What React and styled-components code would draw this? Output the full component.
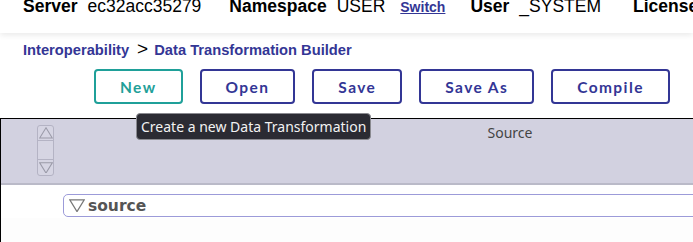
import React from "react";
import styled, { createGlobalStyle } from "styled-components";

const GlobalStyle = createGlobalStyle`
  html, body {
    margin: 0;
    padding: 0;
    background: #fff;
    overflow: hidden;
  }
  body {
    font-family: "Liberation Sans", Arial, sans-serif;
  }
`;

const Page = styled.div`
  width: 693px;
  height: 242px;
  overflow: hidden;
  position: relative;
`;

const TopBar = styled.header`
  height: 33px;
  display: flex;
  align-items: flex-start;
  padding-left: 23px;
  background: #fff;
  box-shadow: 0 2px 6px rgba(0, 0, 0, 0.09);
  white-space: nowrap;
  position: relative;
  z-index: 1;
`;

const Pair = styled.div`
  display: flex;
  align-items: baseline;
  gap: 10px;
  margin-top: -2px;
  margin-right: ${(p) => p.$space ?? 28}px;
  font-size: 17.5px;
  line-height: 17.5px;
  color: #000;
  b {
    font-weight: 700;
  }
`;

const SwitchLink = styled.a`
  font-size: 14px;
  font-weight: 700;
  color: #333695;
  text-decoration: underline;
  margin-left: 5px;
`;

const Breadcrumb = styled.nav`
  display: flex;
  align-items: baseline;
  padding: 7px 0 0 23px;
  height: 18px;
  line-height: 18px;
  font-size: 14.7px;
  font-weight: 700;
  color: #333695;
  span.sep {
    color: #000;
    font-weight: 400;
    font-size: 19px;
    margin: 0 6px 0 8px;
  }
`;

const Toolbar = styled.div`
  position: relative;
  display: flex;
  gap: 17px;
  padding: 11px 0 0 94px;
`;

const Button = styled.button`
  height: 35px;
  padding: 0 24px;
  background: #fff;
  border: 2px solid ${(p) => (p.$active ? "#1fa099" : "#333695")};
  color: ${(p) => (p.$active ? "#1fa099" : "#333695")};
  border-radius: 4px;
  font-family: Lato, "Liberation Sans", sans-serif;
  font-weight: 700;
  font-size: 15.5px;
  letter-spacing: 1.4px;
  cursor: pointer;
`;

const Tooltip = styled.div`
  position: absolute;
  left: 136px;
  top: 55px;
  height: 25px;
  padding: 0 4px;
  display: flex;
  align-items: center;
  background: #2b2b33;
  border: 1px solid #8a8a90;
  border-radius: 4px;
  color: #f2f2f2;
  font-family: "Noto Sans", "Open Sans", sans-serif;
  font-size: 14px;
  white-space: nowrap;
  z-index: 5;
`;

const Panel = styled.section`
  margin-top: 14px;
  width: 1000px;
  border-top: 1px solid #000;
  border-left: 1px solid #000;
  height: 200px;
  background: #fdfdfd;
`;

const PanelHeader = styled.div`
  display: grid;
  grid-template-columns: 62px 894px;
  height: 64px;
  background: #d2d1e0;
  border-bottom: 2px solid #babac8;
`;

const Gutter = styled.div`
  padding: 6px 0 0 36px;
`;

const Scroller = styled.div`
  width: 15px;
  height: 49px;
  border: 1px solid #b4b3c4;
  border-radius: 3px;
  display: grid;
  grid-template-rows: 15px 1fr 16px;
  background: #d6d5e3;
`;

const ScrollPart = styled.div`
  display: flex;
  align-items: center;
  justify-content: center;
  border-top: ${(p) => (p.$line === "top" ? "1px solid #b4b3c4" : "none")};
  border-bottom: ${(p) => (p.$line === "bottom" ? "1px solid #b4b3c4" : "none")};
`;

const ColumnTitle = styled.div`
  text-align: center;
  padding-top: 4px;
  font-family: "Noto Sans", "Open Sans", sans-serif;
  font-size: 14px;
  color: #444;
`;

const Body = styled.div`
  padding: 9px 0 0 62px;
  background: #fff;
  height: 24px;
`;

const TreeRow = styled.div`
  display: flex;
  align-items: center;
  gap: 3px;
  height: 21px;
  padding-left: 5px;
  border: 1px solid #9c9bd9;
  border-radius: 5px;
  background: #fff;
  font-family: "DejaVu Sans", Verdana, sans-serif;
  font-weight: 700;
  font-size: 15.5px;
  color: #555;
`;

const Tri = ({ up, size = 12, color = "#9a9aa8" }) => (
  <svg width={size} height={size * 0.85} viewBox="0 0 12 10">
    {up ? (
      <path d="M6 0.6 L11.4 9.4 L0.6 9.4 Z" fill="none" stroke={color} strokeWidth="0.9" />
    ) : (
      <path d="M0.6 0.6 L11.4 0.6 L6 9.4 Z" fill="none" stroke={color} strokeWidth="0.9" />
    )}
  </svg>
);

export default function App() {
  return (
    <Page>
      <GlobalStyle />
      <TopBar>
        <Pair>
          <b>Server</b>
          <span>ec32acc35279</span>
        </Pair>
        <Pair $space={25}>
          <b>Namespace</b>
          <span>USER</span>
          <SwitchLink>Switch</SwitchLink>
        </Pair>
        <Pair $space={32}>
          <b>User</b>
          <span>_SYSTEM</span>
        </Pair>
        <Pair>
          <b>Licensed To</b>
        </Pair>
      </TopBar>
      <Breadcrumb>
        <span>Interoperability</span>
        <span className="sep">&gt;</span>
        <span>Data Transformation Builder</span>
      </Breadcrumb>
      <Toolbar>
        <Button $active>New</Button>
        <Button>Open</Button>
        <Button>Save</Button>
        <Button>Save As</Button>
        <Button>Compile</Button>
        <Tooltip>Create a new Data Transformation</Tooltip>
      </Toolbar>
      <Panel>
        <PanelHeader>
          <Gutter>
            <Scroller>
              <ScrollPart $line="bottom">
                <Tri up size={14} />
              </ScrollPart>
              <ScrollPart />
              <ScrollPart $line="top">
                <Tri size={14} />
              </ScrollPart>
            </Scroller>
          </Gutter>
          <ColumnTitle>Source</ColumnTitle>
        </PanelHeader>
        <Body>
          <TreeRow>
            <Tri size={16} color="#777" />
            <span>source</span>
          </TreeRow>
        </Body>
      </Panel>
    </Page>
  );
}
